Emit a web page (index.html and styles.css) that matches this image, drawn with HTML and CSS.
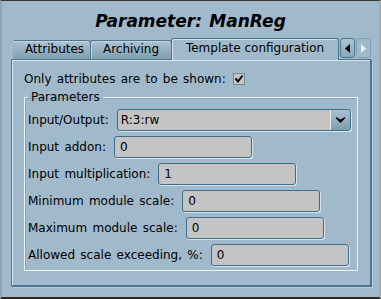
FILE: index.html
```html
<!DOCTYPE html>
<html lang="en">
<head>
  <meta charset="UTF-8" />
  <title>Parameter: ManReg</title>
  <link rel="stylesheet" href="styles.css">
</head>
<body>
  <div class="window">
    <h1 class="title">Parameter: ManReg</h1>

    <div class="tabbar">
      <div class="tab tab-cut">Attributes</div>
      <div class="tab tab-archiving">Archiving</div>
      <div class="tab tab-active">Template configuration</div>
      <div class="scroll-btn">
        <svg width="7" height="9" viewBox="0 0 7 9"><polygon points="6,0 6,9 1,4.5" fill="#000"/></svg>
      </div>
      <div class="scroll-btn disabled">
        <svg width="7" height="9" viewBox="0 0 7 9"><polygon points="1,0 1,9 6,4.5" fill="#eef3f6"/></svg>
      </div>
    </div>

    <div class="panel">
      <div class="check-row">
        <span>Only attributes are to be shown:</span>
        <span class="checkbox">
          <svg width="10" height="10" viewBox="0 0 10 10"><polyline points="1.5,4.5 4,7.5 8.5,1.5" fill="none" stroke="#000" stroke-width="2"/></svg>
        </span>
      </div>

      <fieldset class="group">
        <legend>Parameters</legend>

        <div class="row">
          <label>Input/Output:</label>
          <div class="combo">
            <span class="combo-text">R:3:rw</span>
            <span class="combo-btn">
              <svg width="9" height="6" viewBox="0 0 9 6"><polygon points="0,0 4.5,2.5 9,0 9,1.5 4.5,6 0,1.5" fill="#000"/></svg>
            </span>
          </div>
        </div>
        <div class="row">
          <label>Input addon:</label>
          <div class="field">0</div>
        </div>
        <div class="row">
          <label>Input multiplication:</label>
          <div class="field">1</div>
        </div>
        <div class="row">
          <label>Minimum module scale:</label>
          <div class="field">0</div>
        </div>
        <div class="row">
          <label>Maximum module scale:</label>
          <div class="field">0</div>
        </div>
        <div class="row">
          <label>Allowed scale exceeding, %:</label>
          <div class="field">0</div>
        </div>
      </fieldset>
    </div>
  </div>
</body>
</html>
```

FILE: styles.css
```css
body {
  margin: 0;
  padding: 0;
  font-family: "DejaVu Sans", sans-serif;
  font-size: 12px;
  word-spacing: 1.5px;
  color: #000;
  background-color: #2e2924;
}
.window {
  box-sizing: border-box;
  width: 381px;
  height: 299px;
  background-color: #a0bacb;
  border-top: 1px solid #3f332b;
  border-left: 2px solid #8ca6b7;
  border-right: 2px solid #a8a6a2;
  border-bottom: 2px solid #2e2924;
}
.title {
  margin: 0;
  height: 27px;
  padding-top: 10px;
  text-align: center;
  font-size: 17px;
  line-height: 20px;
  font-weight: bold;
  font-style: italic;
}

/* tabs */
.tabbar {
  display: flex;
  align-items: flex-end;
  height: 21px;
  margin-left: 9px;
  position: relative;
  z-index: 1;
}
.tab {
  box-sizing: border-box;
  height: 19px;
  line-height: 17px;
  text-align: center;
  word-spacing: 0;
  border: 1px solid #4d7692;
  border-bottom: none;
  border-radius: 3px 3px 0 0;
  background: linear-gradient(#adc4d2, #7f9db1);
  box-shadow: inset 1px 1px 0 #c4d5df;
}
.tab-cut {
  width: 80px;
  padding-left: 8px;
  border-left: none;
  clip-path: polygon(3px 0, 100% 0, 100% 100%, 3px 100%, 1px 15px, 3px 12px, 0 8px, 3px 4px);
}
.tab-archiving {
  width: 82px;
  margin-left: -1px;
}
.tab-active {
  width: 168px;
  height: 22px;
  margin-left: -1px;
  margin-bottom: -1px;
  line-height: 19px;
  background: #a0bacb;
  box-shadow: inset 1px 1px 0 #d6e3eb;
}
.scroll-btn {
  box-sizing: border-box;
  width: 15px;
  height: 20px;
  margin-left: 1px;
  margin-bottom: 1px;
  display: flex;
  align-items: center;
  justify-content: center;
  border: 1px solid #4d7692;
  border-radius: 3px;
  background: linear-gradient(#adc4d2, #8aa7ba);
}
.scroll-btn.disabled {
  border-color: #7f9fb4;
  background: #a0bacb;
}

/* panel */
.panel {
  box-sizing: border-box;
  width: 360px;
  height: 227px;
  margin-left: 9px;
  padding: 11px 12px 0 12px;
  border: 1px solid #4d7692;
  box-shadow: inset 1px 1px 0 #dbe6ed, 1px 1px 0 #4d7692, 2px 2px 0 #b8ccd8;
}
.check-row {
  display: flex;
  align-items: center;
  height: 16px;
}
.checkbox {
  box-sizing: border-box;
  width: 12px;
  height: 12px;
  margin-left: 7px;
  display: flex;
  align-items: center;
  justify-content: center;
  background-color: #c6c6c6;
  border: 1px solid #6c8ca2;
}

/* group box */
.group {
  margin: 3px 0 0 0;
  padding: 5px 3px 4px 3px;
  border: 1px solid #eef3f6;
  box-shadow: inset 1px 1px 0 #8aa6b8;
}
.group legend {
  padding: 0 3px;
  line-height: 14px;
}
.row {
  display: flex;
  align-items: center;
  height: 22px;
  margin-bottom: 5px;
}
.row:last-child {
  margin-bottom: 0;
}
.row label {
  margin-right: 8px;
  white-space: nowrap;
}
.field, .combo {
  box-sizing: border-box;
  height: 22px;
  width: 138px;
  padding-left: 5px;
  line-height: 20px;
  background-color: #c4c4c4;
  border: 1px solid #3f6e8d;
  border-radius: 3px;
  box-shadow: 1px 1px 0 #d8e4eb;
}
.combo {
  width: 234px;
  display: flex;
  padding-left: 3px;
}
.combo-text {
  flex: 1;
}
.combo-btn {
  width: 19px;
  display: flex;
  align-items: center;
  justify-content: center;
  border-left: 1px solid #e6eef2;
  border-radius: 0 2px 2px 0;
  background: linear-gradient(#a9c1d0, #7f9db1);
}
```
